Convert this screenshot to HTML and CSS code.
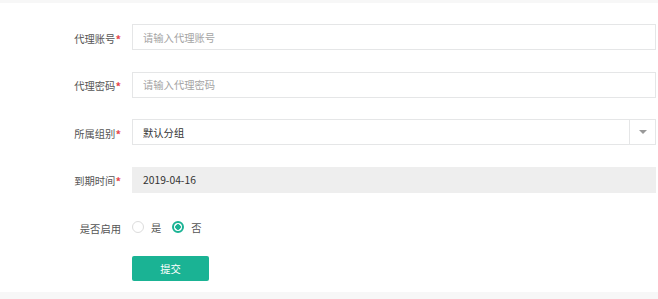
FILE: index.html
```html
<!DOCTYPE html>
<html lang="zh-CN">

<head>
    <meta charset="UTF-8">
    <meta name="viewport" content="width=device-width, initial-scale=1.0">
    <title>添加代理</title>
    <link rel="stylesheet" href="styles.css">
</head>

<body>
    <main class="panel">
        <form class="agent-form">
            <div class="form-row">
                <label class="form-label required" for="account">代理账号</label>
                <input class="form-control" type="text" id="account" placeholder="请输入代理账号">
            </div>
            <div class="form-row">
                <label class="form-label required" for="password">代理密码</label>
                <input class="form-control" type="text" id="password" placeholder="请输入代理密码">
            </div>
            <div class="form-row">
                <label class="form-label required">所属组别</label>
                <div class="form-control select">
                    <span class="select-value">默认分组</span>
                    <span class="select-arrow"></span>
                </div>
            </div>
            <div class="form-row">
                <label class="form-label required" for="expire">到期时间</label>
                <input class="form-control" type="text" id="expire" value="2019-04-16" disabled>
            </div>
            <div class="form-row">
                <span class="form-label">是否启用</span>
                <div class="radio-group">
                    <label class="radio"><span class="radio-box"></span>是</label>
                    <label class="radio"><span class="radio-box checked"></span>否</label>
                </div>
            </div>
            <div class="form-actions">
                <button class="btn-primary" type="button">提交</button>
            </div>
        </form>
    </main>
</body>

</html>
```

FILE: styles.css
```css
* {
    box-sizing: border-box;
    margin: 0;
    padding: 0;
}

body {
    height: 100vh;
    background-color: #f7f7f7;
    font-family: 'Noto Sans CJK SC', 'Liberation Sans', sans-serif;
    font-size: 10.3px;
    color: #555;
    padding-top: 3px;
}

.panel {
    background-color: #fff;
    height: 289px;
}

.agent-form {
    padding-top: 21px;
    display: flex;
    flex-direction: column;
    gap: 21.6px;
}

.form-row {
    display: flex;
    align-items: center;
    height: 26px;
}

.form-label {
    width: 132px;
    padding-right: 11px;
    text-align: right;
    padding-top: 3px;
    color: #555;
}

.form-label.required::after {
    content: '*';
    color: #e5484d;
    font-size: 11px;
    font-weight: bold;
    vertical-align: -1px;
}

.form-control {
    flex-grow: 1;
    margin-right: 2px;
    height: 26px;
    border: 1px solid #e5e6e7;
    background-color: #fff;
    padding: 0 10px;
    font-family: inherit;
    font-size: inherit;
    color: #333;
    outline: none;
}

.form-control::placeholder {
    color: #a4a4a4;
}

.form-control:disabled {
    background-color: #eeeeee;
    border-color: #eeeeee;
    color: #333;
}

.select {
    display: flex;
    align-items: center;
    padding-right: 0;
}

.select-value {
    flex-grow: 1;
}

.select-arrow {
    width: 26px;
    height: 100%;
    border-left: 1px solid #e5e6e7;
    display: flex;
    align-items: center;
    justify-content: center;
}

.select-arrow::after {
    content: '';
    border-left: 4px solid transparent;
    border-right: 4px solid transparent;
    border-top: 4px solid #999;
}

.radio-group {
    display: flex;
    gap: 11px;
}

.radio {
    display: flex;
    align-items: center;
    gap: 7px;
    color: #555;
}

.radio-box {
    width: 12px;
    height: 12px;
    border-radius: 50%;
    border: 1px solid #dcdcdc;
    background-color: #fff;
}

.radio-box.checked {
    border: 2px solid #1ab394;
    background: radial-gradient(circle, #1ab394 0 2.5px, #fff 3px);
}

.form-actions {
    padding-left: 132px;
    margin-top: -5.6px;
}

.btn-primary {
    width: 77px;
    height: 25px;
    border: none;
    border-radius: 2px;
    background-color: #1ab394;
    color: #fff;
    font-family: inherit;
    font-size: inherit;
}
```
